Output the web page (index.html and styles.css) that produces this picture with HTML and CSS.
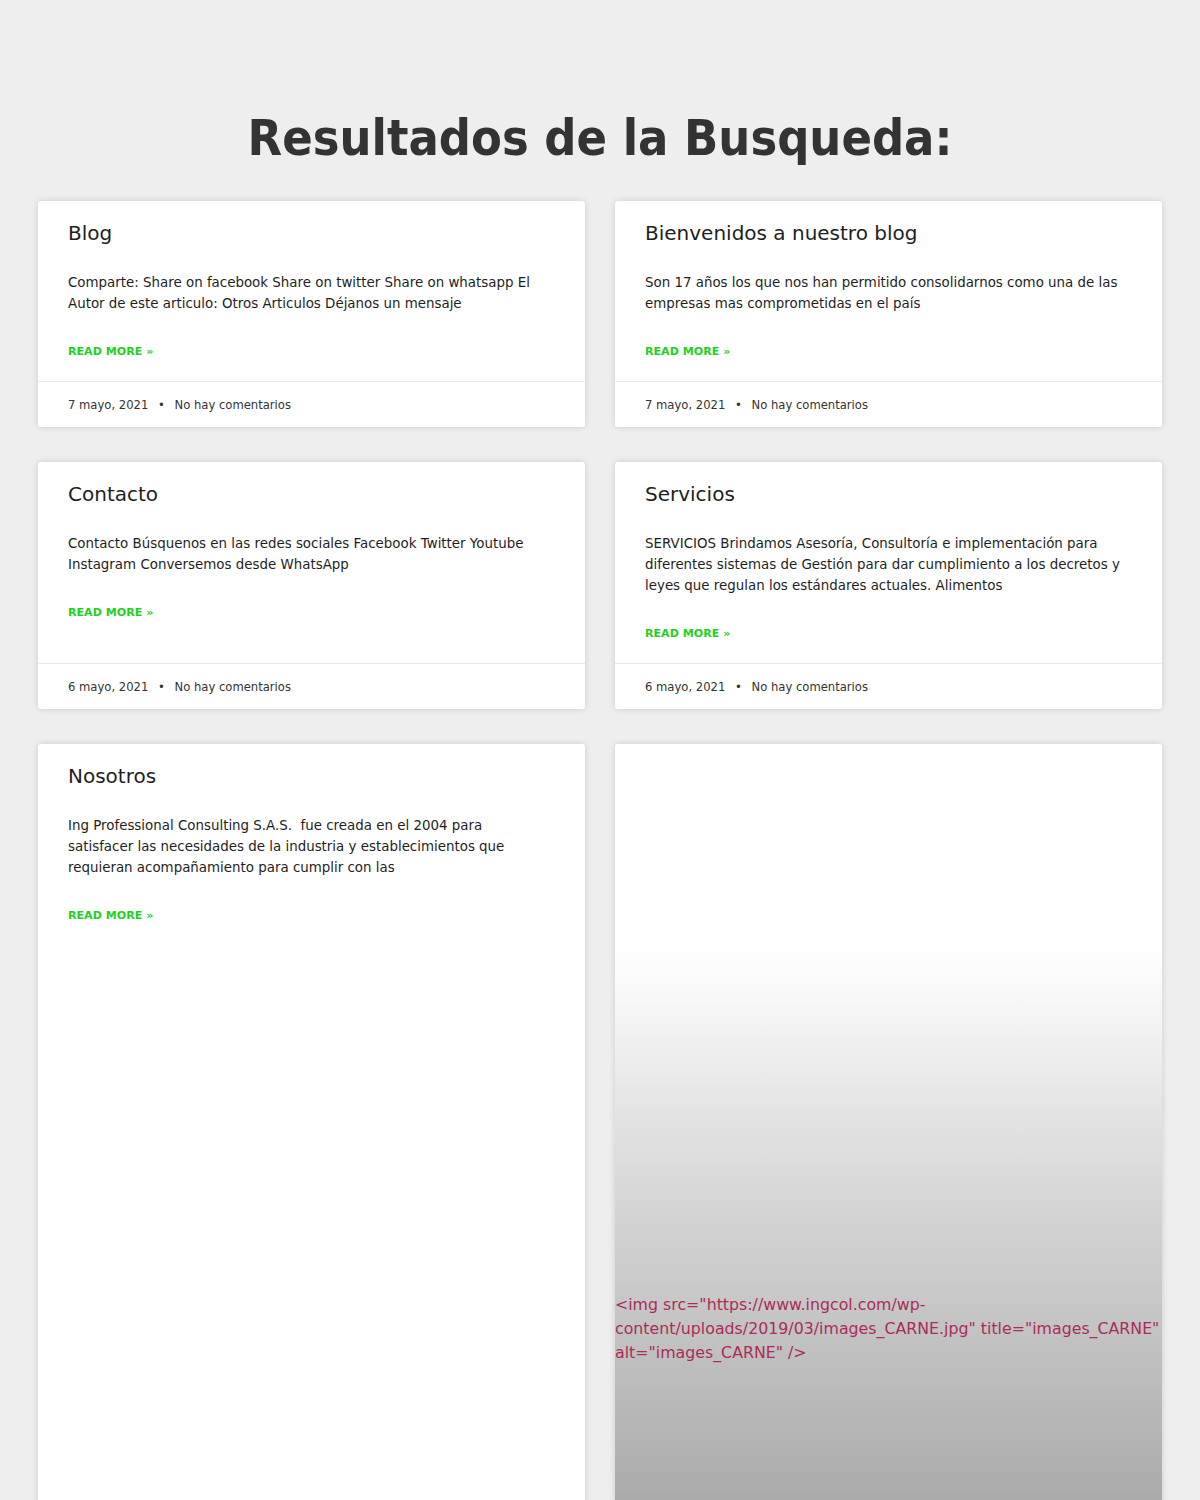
FILE: index.html
```html
<!DOCTYPE html>
<html lang="es">

<head>
    <meta charset="UTF-8">
    <meta name="viewport" content="width=device-width, initial-scale=1.0">
    <title>Resultados de la Busqueda</title>
    <link rel="stylesheet" href="styles.css">
</head>

<body>
    <h1 class="page-title">Resultados de la Busqueda:</h1>

    <div class="results">
        <!--fila 1-->
        <article class="post">
            <div class="post-body">
                <h3 class="post-title">Blog</h3>
                <p class="post-excerpt">Comparte: Share on facebook Share on twitter Share on whatsapp El Autor de este articulo: Otros Articulos Déjanos un mensaje</p>
                <a class="read-more" href="#">Read More »</a>
            </div>
            <div class="post-meta">
                <span>7 mayo, 2021</span>
                <span class="sep">•</span>
                <span>No hay comentarios</span>
            </div>
        </article>

        <article class="post">
            <div class="post-body">
                <h3 class="post-title">Bienvenidos a nuestro blog</h3>
                <p class="post-excerpt">Son 17 años los que nos han permitido consolidarnos como una de las empresas mas comprometidas en el país</p>
                <a class="read-more" href="#">Read More »</a>
            </div>
            <div class="post-meta">
                <span>7 mayo, 2021</span>
                <span class="sep">•</span>
                <span>No hay comentarios</span>
            </div>
        </article>

        <!--fila 2-->
        <article class="post">
            <div class="post-body">
                <h3 class="post-title">Contacto</h3>
                <p class="post-excerpt">Contacto Búsquenos en las redes sociales Facebook Twitter Youtube Instagram Conversemos desde WhatsApp</p>
                <a class="read-more" href="#">Read More »</a>
            </div>
            <div class="post-meta">
                <span>6 mayo, 2021</span>
                <span class="sep">•</span>
                <span>No hay comentarios</span>
            </div>
        </article>

        <article class="post">
            <div class="post-body">
                <h3 class="post-title">Servicios</h3>
                <p class="post-excerpt">SERVICIOS Brindamos Asesoría, Consultoría e implementación para diferentes sistemas de Gestión para dar cumplimiento a los decretos y leyes que regulan los estándares actuales. Alimentos</p>
                <a class="read-more" href="#">Read More »</a>
            </div>
            <div class="post-meta">
                <span>6 mayo, 2021</span>
                <span class="sep">•</span>
                <span>No hay comentarios</span>
            </div>
        </article>

        <!--fila 3-->
        <article class="post">
            <div class="post-body">
                <h3 class="post-title">Nosotros</h3>
                <p class="post-excerpt">Ing Professional Consulting S.A.S.&nbsp; fue creada en el 2004 para satisfacer las necesidades de la industria y establecimientos que requieran acompañamiento para cumplir con las</p>
                <a class="read-more" href="#">Read More »</a>
            </div>
        </article>

        <article class="post post-image">
            <div class="image-box">
                <span class="broken-img">&lt;img src="https://www.ingcol.com/wp-content/uploads/2019/03/images_CARNE.jpg" title="images_CARNE" alt="images_CARNE" /&gt;</span>
            </div>
        </article>
    </div>
</body>

</html>
```

FILE: styles.css
```css
body {
    margin: 0;
    background-color: #eeeeee;
    font-family: "DejaVu Sans", Verdana, sans-serif;
    color: #1e1e1e;
}

.page-title {
    margin: 0;
    padding: 100px 0 25px;
    text-align: center;
    font-family: "DejaVu Sans Condensed", "DejaVu Sans", sans-serif;
    font-stretch: condensed;
    font-size: 50px;
    line-height: 76px;
    font-weight: bold;
    color: #333;
}

.results {
    display: grid;
    grid-template-columns: 1fr 1fr;
    column-gap: 30px;
    row-gap: 35px;
    width: 1124px;
    margin: 0 auto;
}

.post {
    display: flex;
    flex-direction: column;
    background-color: #fff;
    border-radius: 3px;
    box-shadow: 0 0 6px rgba(0, 0, 0, 0.15);
    overflow: hidden;
}

.post-body {
    flex: 1;
    padding: 19px 35px 20px 30px;
}

.post-title {
    margin: 0 0 25px;
    font-size: 20px;
    line-height: 27px;
    font-weight: normal;
    color: #1e1e1e;
}

.post-excerpt {
    margin: 0 0 29px;
    font-size: 13.4px;
    line-height: 21px;
}

.read-more {
    display: block;
    font-size: 11.1px;
    line-height: 18px;
    font-weight: bold;
    text-transform: uppercase;
    text-decoration: none;
    color: #1fd11f;
}

.post-meta {
    border-top: 1px solid #eaeaea;
    padding: 16px 30px 14px;
    font-size: 11.6px;
    line-height: 15px;
    color: #333;
}

.post-meta .sep {
    margin: 0 6px;
}

.post:nth-child(5),
.post-image {
    min-height: 1170px;
}

.image-box {
    flex: 1;
    display: flex;
    align-items: center;
    background: linear-gradient(#fff 0, #fff 205px, #d6d6d6 455px, #aaa 760px, #999 1170px);
}

.broken-img {
    display: block;
    font-size: 15.8px;
    line-height: 24px;
    color: #ab2c58;
    word-break: break-word;
}
```
